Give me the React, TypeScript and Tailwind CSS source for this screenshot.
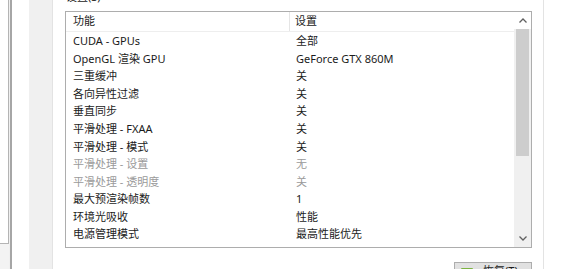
import React from "react";

const rows: { f: string; s: string; dim?: boolean }[] = [
  { f: "CUDA - GPUs", s: "全部" },
  { f: "OpenGL 渲染 GPU", s: "GeForce GTX 860M" },
  { f: "三重缓冲", s: "关" },
  { f: "各向异性过滤", s: "关" },
  { f: "垂直同步", s: "关" },
  { f: "平滑处理 - FXAA", s: "关" },
  { f: "平滑处理 - 模式", s: "关" },
  { f: "平滑处理 - 设置", s: "无", dim: true },
  { f: "平滑处理 - 透明度", s: "关", dim: true },
  { f: "最大预渲染帧数", s: "1" },
  { f: "环境光吸收", s: "性能" },
  { f: "电源管理模式", s: "最高性能优先" },
];

export default function App() {
  return (
    <div
      className="w-[580px] h-[269px] overflow-hidden flex bg-white text-[11px] text-[#1b1b1b]"
      style={{ fontFamily: '"Noto Sans", "Noto Sans CJK SC", sans-serif' }}
    >
      <div className="w-[9px] shrink-0 flex flex-col">
        <div className="h-[244px] shrink-0 bg-white border-r border-b border-[#b4b4b4]" />
        <div className="flex-1 bg-[#f3f3f3]" />
      </div>
      <div className="w-[1px] shrink-0 bg-[#f0f0f0]" />
      <div className="w-[2px] shrink-0 bg-[#a6a6a6]" />
      <div className="w-[17px] shrink-0 bg-white" />
      <div className="w-[24px] shrink-0 bg-[#f0f0f0] border-r border-[#e3e3e3]" />
      <div className="w-[12px] shrink-0" />
      <div className="w-[467px] shrink-0 flex flex-col">
        <div className="h-[11px] shrink-0 relative overflow-hidden">
          <div className="absolute left-[1px] top-[-10px] leading-[14px] whitespace-nowrap">设置(S)</div>
        </div>
        <div className="h-[237px] shrink-0 border border-[#adadad] flex">
          <div className="flex-1 flex flex-col">
            <div className="h-[20px] shrink-0 flex items-center border-b border-[#eeeeee]">
              <div className="w-[224px] pl-[7px] h-full flex items-center border-r border-[#e5e5e5]">功能</div>
              <div className="pl-[5px]">设置</div>
            </div>
            {rows.map((r) => (
              <div
                key={r.f}
                className={`h-[17.55px] shrink-0 flex items-center leading-none ${r.dim ? "text-[#9a9a9a]" : ""}`}
              >
                <div className="w-[224px] pl-[7px] whitespace-nowrap">{r.f}</div>
                <div className="pl-[6px] whitespace-nowrap">{r.s}</div>
              </div>
            ))}
          </div>
          <div className="w-[17px] shrink-0 bg-[#f0f0f0] flex flex-col items-center">
            <div className="h-[17px] shrink-0 w-full bg-white flex items-center justify-center">
              <svg width="8" height="5" viewBox="0 0 8 5">
                <path d="M0.5 4.5 L4 1 L7.5 4.5" stroke="#606060" strokeWidth="1.3" fill="none" />
              </svg>
            </div>
            <div className="w-[13px] h-[127px] shrink-0 bg-[#cdcdcd]" />
            <div className="flex-1" />
            <div className="h-[17px] shrink-0 w-full flex items-center justify-center">
              <svg width="8" height="5" viewBox="0 0 8 5">
                <path d="M0.5 0.5 L4 4 L7.5 0.5" stroke="#606060" strokeWidth="1.3" fill="none" />
              </svg>
            </div>
          </div>
        </div>
        <div className="flex justify-end mt-[14px] shrink-0">
          <div className="w-[78px] h-[24px] bg-[#e1e1e1] border border-[#adadad] flex items-start pt-[1px]">
            <div className="ml-[6px] mt-[4px] w-[12px] h-[6px] bg-[#7cb342] rounded-[1px]" />
            <div className="ml-[10px] leading-[14px] whitespace-nowrap">恢复(T)</div>
          </div>
        </div>
      </div>
      <div className="w-[11px] shrink-0" />
      <div className="w-[1px] shrink-0 bg-[#e3e3e3]" />
      <div className="flex-1 bg-white" />
    </div>
  );
}
